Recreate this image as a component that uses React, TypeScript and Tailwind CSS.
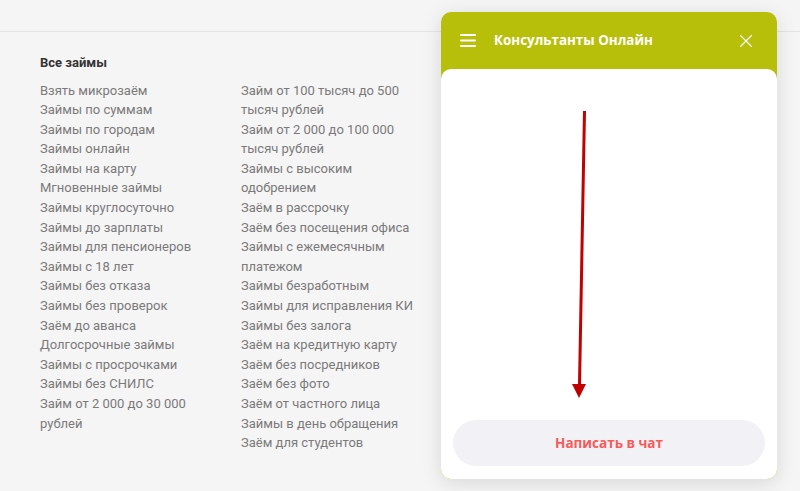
import { X } from "lucide-react"

const col1 = [
  "Взять микрозаём",
  "Займы по суммам",
  "Займы по городам",
  "Займы онлайн",
  "Займы на карту",
  "Мгновенные займы",
  "Займы круглосуточно",
  "Займы до зарплаты",
  "Займы для пенсионеров",
  "Займы с 18 лет",
  "Займы без отказа",
  "Займы без проверок",
  "Заём до аванса",
  "Долгосрочные займы",
  "Займы с просрочками",
  "Займы без СНИЛС",
  "Займ от 2 000 до 30 000 рублей",
]

const col2 = [
  "Займ от 100 тысяч до 500 тысяч рублей",
  "Займ от 2 000 до 100 000 тысяч рублей",
  "Займы с высоким одобрением",
  "Заём в рассрочку",
  "Заём без посещения офиса",
  "Займы с ежемесячным платежом",
  "Займы безработным",
  "Займы для исправления КИ",
  "Займы без залога",
  "Заём на кредитную карту",
  "Заём без посредников",
  "Заём без фото",
  "Заём от частного лица",
  "Займы в день обращения",
  "Заём для студентов",
]

function LinkColumn({ items }: { items: string[] }) {
  return (
    <ul className="flex flex-col">
      {items.map((item) => (
        <li key={item}>
          <a href="#" className="text-[#7a7a7a] hover:text-[#333]">{item}</a>
        </li>
      ))}
    </ul>
  )
}

function ChatWidget() {
  return (
    <div className="absolute left-[441px] top-[12px] w-[336px] h-[467px] rounded-[10px] bg-[#b8bf0b] shadow-[0_4px_20px_rgba(0,0,0,0.12)] flex flex-col font-['Open_Sans',sans-serif]">
      <div className="h-[57px] flex items-center pl-[19px] pr-[20px] text-white">
        <svg width="16" height="13" viewBox="0 0 16 13" className="shrink-0">
          <rect x="0" y="0" width="16" height="2" rx="1" fill="white" />
          <rect x="0" y="5.5" width="16" height="2" rx="1" fill="white" />
          <rect x="0" y="11" width="16" height="2" rx="1" fill="white" />
        </svg>
        <span className="ml-[18px] text-[13.4px] font-bold">Консультанты Онлайн</span>
        <X className="ml-auto" size={22} strokeWidth={1.2} />
      </div>
      <div className="flex-1 bg-white rounded-[10px] relative flex flex-col justify-end px-[12px] pb-[13px]">
        {/* red hint arrow pointing at the button */}
        <svg className="absolute left-[128px] top-[38px]" width="24" height="295" viewBox="0 0 24 295">
          <line x1="15.5" y1="4" x2="10.5" y2="278" stroke="#c10000" strokeWidth="3" />
          <polygon points="3,277 17,277 10,291" fill="#c10000" />
        </svg>
        <button className="h-[46px] w-full rounded-full bg-[#f2f1f6] text-[#f45b5b] text-[13.5px] font-bold">
          Написать в чат
        </button>
      </div>
    </div>
  )
}

export default function App() {
  return (
    <main className="relative h-[491px] w-full overflow-hidden bg-[#f5f5f5] font-['Roboto',sans-serif]">
      <div className="h-[32px] border-b border-[#e4e4e4]" />
      <div className="pl-[40px] pt-[21px]">
        <h3 className="text-[13px] font-bold text-[#333333] leading-[19.5px]">Все займы</h3>
        <div className="mt-[8px] grid grid-cols-[176px_176px] gap-x-[25px] text-[13px] leading-[19.6px]">
          <LinkColumn items={col1} />
          <LinkColumn items={col2} />
        </div>
      </div>
      <ChatWidget />
    </main>
  )
}
